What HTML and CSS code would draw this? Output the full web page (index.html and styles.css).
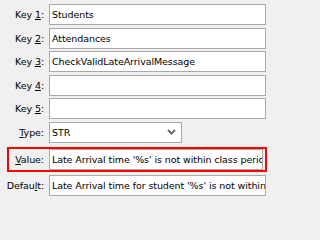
FILE: index.html
```html
<!DOCTYPE html>
<html>
<head>
<meta charset="utf-8">
<link rel="stylesheet" href="styles.css">
</head>
<body>
<div class="form">
  <div class="row"><label class="lbl">Key <u>1</u>:</label><div class="field">Students</div></div>
  <div class="row"><label class="lbl">Key <u>2</u>:</label><div class="field">Attendances</div></div>
  <div class="row"><label class="lbl">Key <u>3</u>:</label><div class="field">CheckValidLateArrivalMessage</div></div>
  <div class="row"><label class="lbl">Key <u>4</u>:</label><div class="field"></div></div>
  <div class="row"><label class="lbl">Key <u>5</u>:</label><div class="field"></div></div>
  <div class="row"><label class="lbl"><u>T</u>ype:</label><div class="field select"><span class="sel-text">STR</span><svg class="chev" width="9" height="6" viewBox="0 0 9 6"><polyline points="1,1 4.5,4.5 8,1" fill="none" stroke="#6b6b6b" stroke-width="2"/></svg></div></div>
  <div class="row hl"><label class="lbl"><u>V</u>alue:</label><div class="field">Late Arrival time '%s' is not within class period</div></div>
  <div class="row"><label class="lbl">Defau<u>l</u>t:</label><div class="field">Late Arrival time for student '%s' is not within class period</div></div>
</div>
</body>
</html>
```
FILE: styles.css
```css
html, body {
  margin: 0;
  padding: 0;
  background: #f0f0f0;
  width: 271px;
  height: 202px;
  overflow: hidden;
}
.form {
  display: flex;
  flex-direction: column;
  gap: 2.5px;
  padding-top: 4px;
  font-family: "DejaVu Sans", Tahoma, sans-serif;
  font-size: 9.5px;
  letter-spacing: -0.08px;
  color: #000;
}
.row {
  display: flex;
  align-items: center;
  gap: 5px;
  height: 21px;
  margin-right: 5px;
}
.lbl {
  width: 44px;
  flex: none;
  text-align: right;
  white-space: nowrap;
}
.field {
  flex: 1;
  min-width: 0;
  height: 21px;
  box-sizing: border-box;
  border: 1px solid #a9a9a9;
  background: #fff;
  padding: 0 2px;
  line-height: 19px;
  white-space: nowrap;
  overflow: hidden;
  color: #000;
}
.select {
  flex: none;
  width: 133px;
  display: flex;
  align-items: center;
  justify-content: space-between;
  padding-right: 5px;
}
.chev {
  display: block;
}
.hl {
  box-sizing: content-box;
  margin-left: 7px;
  margin-right: 4px;
  margin-top: 1.5px;
  margin-bottom: 1px;
  border: 2px solid #ff0000;
  padding-right: 2px;
}
.hl .lbl {
  width: 35px;
}
```
